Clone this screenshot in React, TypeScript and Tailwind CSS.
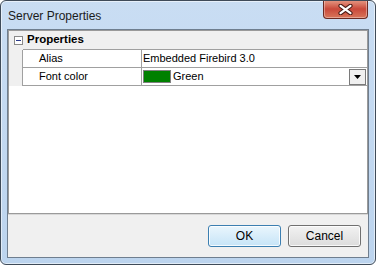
import React from "react";

const font = { fontFamily: '"Liberation Sans", Arial, sans-serif' };

export default function App() {
  return (
    <div className="w-[376px] h-[265px] bg-white" style={font}>
      <div className="w-[376px] h-[265px] rounded-[6px] border border-[#3f4b59] bg-gradient-to-b from-[#c9ddf3] to-[#bcd4ee] shadow-[inset_0_0_0_1px_rgba(255,255,255,0.55)] flex flex-col overflow-hidden">
        {/* title bar */}
        <div className="h-[28px] flex items-start justify-between pl-[7px] pr-[7px]">
          <div className="pt-[8px] text-[12px] leading-[14px] text-[#1b1b1b]">Server Properties</div>
          <div className="w-[45px] h-[19px] -mt-px rounded-b-[4px] border border-t-0 border-[#6b2a22] bg-gradient-to-b from-[#e59a86] via-[#c9483a] to-[#d8755a] shadow-[inset_0_0_0_1px_rgba(255,255,255,0.35)] flex items-center justify-center">
            <svg width="15" height="11" viewBox="0 0 15 11">
              <path d="M2.5 1.8 L12.5 9.2 M12.5 1.8 L2.5 9.2" stroke="#4b1c16" strokeWidth="4.2" strokeLinecap="round" />
              <path d="M2.5 1.8 L12.5 9.2 M12.5 1.8 L2.5 9.2" stroke="#ffffff" strokeWidth="2.2" strokeLinecap="round" />
            </svg>
          </div>
        </div>
        {/* client */}
        <div className="mx-[6px] h-[229px] border border-[#6f7e8f] bg-[#f0f0f0] flex flex-col">
          <div className="h-[184px] border border-[#9a9a9a] bg-white flex flex-col text-[11px] text-black">
            {/* category row */}
            <div className="h-[19px] flex bg-[#f0f0f0]">
              <div className="w-[14px] flex items-center justify-end">
                <div className="w-[9px] h-[9px] border border-[#8a8a8a] bg-white flex items-center justify-center">
                  <div className="w-[5px] h-px bg-[#2a3a8a]" />
                </div>
              </div>
              <div className="flex-1 flex items-center pl-[4px] font-bold text-[11.5px] border-b border-[#a0a0a0]">Properties</div>
            </div>
            {/* alias row */}
            <div className="h-[18px] flex">
              <div className="w-[14px] bg-[#f0f0f0] border-r border-[#a0a0a0]" />
              <div className="w-[119px] border-r border-b border-[#a0a0a0] flex items-center pl-[16px]">Alias</div>
              <div className="flex-1 flex items-center pl-[1px] border-b border-[#a0a0a0]">Embedded Firebird 3.0</div>
            </div>
            {/* font color row */}
            <div className="h-[18px] flex">
              <div className="w-[14px] bg-[#f0f0f0] border-r border-[#a0a0a0]" />
              <div className="w-[119px] border-r border-b border-[#a0a0a0] flex items-center pl-[16px]">Font color</div>
              <div className="flex-1 flex items-center pl-[1px] pr-px border-b border-[#a0a0a0]">
                <div className="w-[28px] h-[13px] border border-[#808080] bg-[#008000]" />
                <div className="pl-[2px] flex-1">Green</div>
                <div className="w-[17px] h-[16px] border border-[#7a7a7a] bg-[#f0f0f0] flex items-center justify-center">
                  <svg width="7" height="4" viewBox="0 0 7 4">
                    <path d="M0 0 H7 L3.5 4 Z" fill="#000" />
                  </svg>
                </div>
              </div>
            </div>
            <div className="flex-1" />
          </div>
          {/* footer */}
          <div className="flex-1 flex items-center justify-end gap-[7px] pr-[7px] border-t border-[#d8d8d8]">
            <button className="w-[73px] h-[22px] rounded-[3px] border border-[#3c7fb1] bg-gradient-to-b from-[#eaf6fd] to-[#c6e4f7] shadow-[inset_0_0_0_1px_rgba(255,255,255,0.8)] text-[12px] text-black" style={font}>
              OK
            </button>
            <button className="w-[73px] h-[22px] rounded-[3px] border border-[#707070] bg-gradient-to-b from-[#f2f2f2] to-[#dcdcdc] shadow-[inset_0_0_0_1px_rgba(255,255,255,0.8)] text-[12px] text-black" style={font}>
              Cancel
            </button>
          </div>
        </div>
      </div>
    </div>
  );
}
